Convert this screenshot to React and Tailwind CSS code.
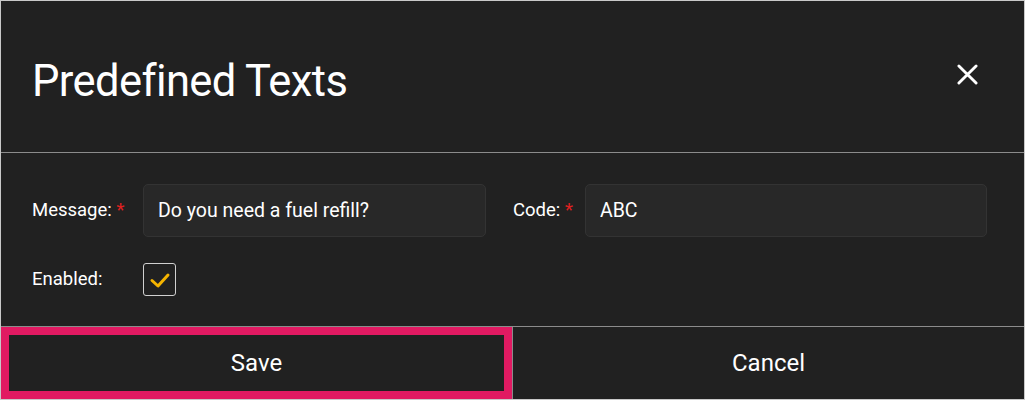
import React, { useState } from 'react';

// Dialog "Predefined Texts" – dark theme
export default function App() {
  const [message, setMessage] = useState('Do you need a fuel refill?');
  const [code, setCode] = useState('ABC');
  const [enabled, setEnabled] = useState(true);

  return (
    <div className="w-[1025px] h-[400px] bg-[#212121] border border-[#c9c9c9] flex flex-col font-['Roboto',sans-serif] text-white overflow-hidden">
      {/* Header */}
      <div className="h-[152px] flex items-center justify-between pl-[31px] pr-[45px] pt-[10px] border-b border-[#8c8c8c]">
        <h1 className="text-[43.5px] font-normal tracking-[-0.6px] leading-none">Predefined Texts</h1>
        <button className="w-[24px] h-[24px] flex items-center justify-center -mt-[14px]">
          <svg width="21" height="21" viewBox="0 0 22 22">
            <path d="M2 2 L20 20 M20 2 L2 20" stroke="#fff" strokeWidth="3" strokeLinecap="round" />
          </svg>
        </button>
      </div>

      {/* Form */}
      <div className="flex-1 pl-[31px] pr-[37px] pt-[31px]">
        <div className="flex items-center h-[53px]">
          <label className="w-[111px] text-[18.5px] shrink-0">
            Message: <span className="text-[#e02020]">*</span>
          </label>
          <input
            value={message}
            onChange={(e) => setMessage(e.target.value)}
            className="w-[343px] h-[53px] bg-[#282828] border border-[#333333] rounded-[5px] px-[14px] text-[19.5px] text-white outline-none"
          />
          <label className="ml-[27px] w-[72px] text-[18.5px] shrink-0">
            Code: <span className="text-[#e02020]">*</span>
          </label>
          <input
            value={code}
            onChange={(e) => setCode(e.target.value)}
            className="flex-1 h-[53px] bg-[#282828] border border-[#333333] rounded-[5px] px-[14px] text-[19.5px] text-white outline-none"
          />
        </div>
        <div className="flex items-center mt-[26px]">
          <label className="w-[111px] text-[18.5px] shrink-0">Enabled:</label>
          <button
            onClick={() => setEnabled(!enabled)}
            className="w-[33px] h-[33px] border border-[#d0d0d0] rounded-[3px] flex items-center justify-center"
          >
            {enabled && (
              <svg width="22" height="22" viewBox="0 0 22 22">
                <path d="M3 11.5 L9 17 L19 6" fill="none" stroke="#f5b400" strokeWidth="3" strokeLinecap="round" strokeLinejoin="round" />
              </svg>
            )}
          </button>
        </div>
      </div>

      {/* Footer buttons */}
      <div className="h-[73px] flex border-t border-[#8c8c8c]">
        <button className="w-[511px] border-[8px] border-[#e11a62] text-[24px] flex items-center justify-center">
          Save
        </button>
        <button className="flex-1 border-l border-[#8c8c8c] text-[24px] flex items-center justify-center">
          Cancel
        </button>
      </div>
    </div>
  );
}
